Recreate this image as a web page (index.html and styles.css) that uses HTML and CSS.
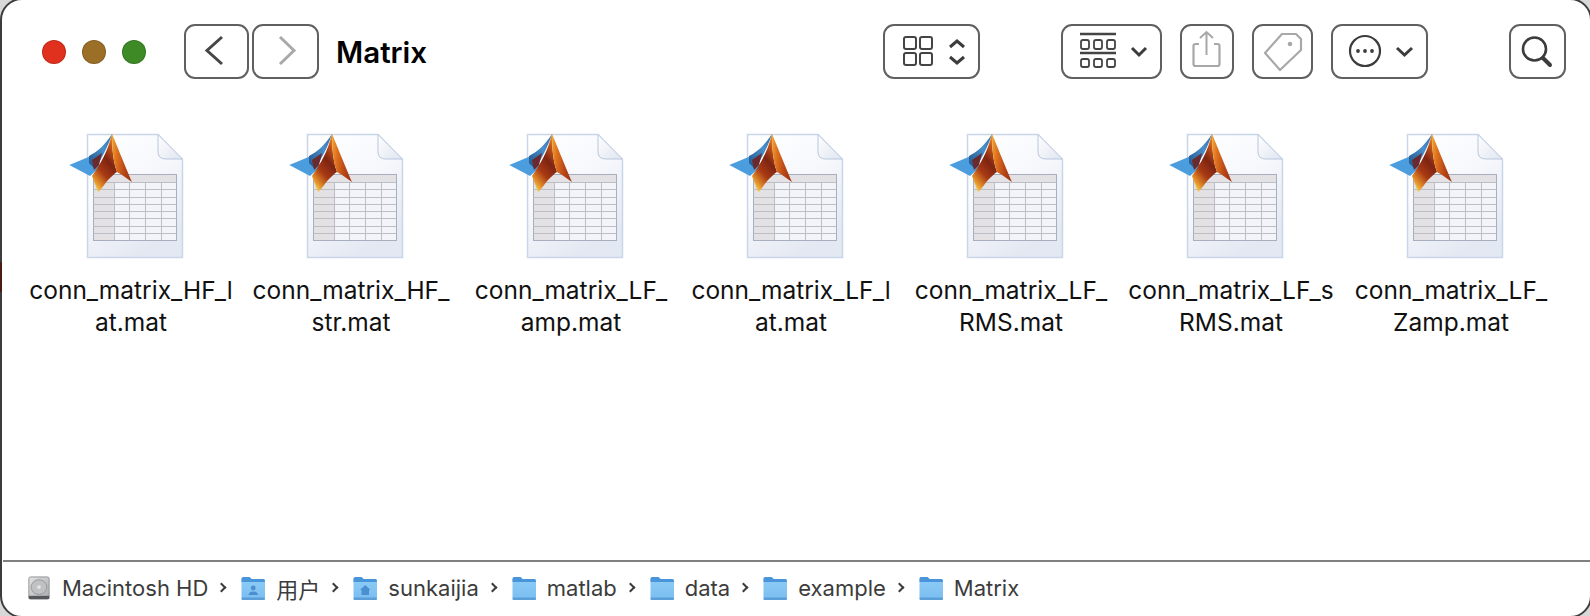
FILE: index.html
```html
<!DOCTYPE html>
<html lang="en">
<head>
  <meta charset="UTF-8" />
  <title>Matrix</title>
  <link rel="stylesheet" href="styles.css">
</head>
<body>
  <svg width="0" height="0" class="defs">
    <defs>
      <linearGradient id="sheetFill" x1="0" y1="0" x2="0.5" y2="1">
        <stop offset="0" stop-color="#ffffff"/>
        <stop offset="0.5" stop-color="#f6f8fc"/>
        <stop offset="1" stop-color="#e4e8f2"/>
      </linearGradient>
      <linearGradient id="foldFill" x1="0" y1="0" x2="1" y2="1">
        <stop offset="0" stop-color="#ffffff"/>
        <stop offset="1" stop-color="#dfe5f0"/>
      </linearGradient>
      <linearGradient id="peak" x1="0" y1="0" x2="1" y2="0.2">
        <stop offset="0" stop-color="#f0a834"/>
        <stop offset="0.3" stop-color="#e0741e"/>
        <stop offset="0.7" stop-color="#bb4a18"/>
        <stop offset="1" stop-color="#a03610"/>
      </linearGradient>
      <linearGradient id="peakLow" x1="0.2" y1="1" x2="0.7" y2="0">
        <stop offset="0" stop-color="#f7d653"/>
        <stop offset="0.15" stop-color="#e08a28"/>
        <stop offset="0.35" stop-color="#a83a14"/>
        <stop offset="0.6" stop-color="#7e2412"/>
        <stop offset="0.85" stop-color="#c5561a"/>
        <stop offset="1" stop-color="#e8922a"/>
      </linearGradient>
      <linearGradient id="ribbon" x1="0" y1="1" x2="1" y2="0">
        <stop offset="0" stop-color="#1f5288"/>
        <stop offset="0.6" stop-color="#4a8fcb"/>
        <stop offset="1" stop-color="#2d6ba6"/>
      </linearGradient>
      <linearGradient id="folderBody" x1="0" y1="0" x2="0" y2="1">
        <stop offset="0" stop-color="#8fcdf7"/>
        <stop offset="1" stop-color="#79bdf0"/>
      </linearGradient>
      <linearGradient id="diskBody" x1="0" y1="0" x2="1" y2="1">
        <stop offset="0" stop-color="#e2e3e5"/>
        <stop offset="1" stop-color="#a9abad"/>
      </linearGradient>

      <symbol id="matfile" viewBox="0 0 116 126">
        <path d="M18.500 1.500H89L113.500 27V124.500H18.500Z" fill="url(#sheetFill)" stroke="#c9d5e8" stroke-width="1.500"/>
        <path d="M89 1.500V19Q89 26 97 26H113.500Z" fill="url(#foldFill)" stroke="#b9c8df" stroke-width="1"/>
        <rect x="24.500" y="41.500" width="83" height="66" fill="#f2f4fa" stroke="#a7aebd"/>
        <rect x="25" y="42" width="82" height="7" fill="#e3e1e4"/>
        <rect x="25" y="49" width="20" height="58" fill="#e4e1e4"/>
        <path d="M24.500 49.500H107.500M24.500 56.500H107.500M24.500 64.500H107.500M24.500 71.500H107.500M24.500 78.500H107.500M24.500 85.500H107.500M24.500 93.500H107.500M24.500 100.500H107.500" stroke="#bcbec6" stroke-width="1" fill="none"/>
        <path d="M45.500 49V107M60.500 49V107M76.500 49V107M92.500 49V107" stroke="#bcbec6" stroke-width="1" fill="none"/>
        <path d="M0.300 32L22 23 32 33 21 43Z" fill="#4b9ddd"/>
        <path d="M20 23C28 19 36 12 43 1 39 14 32 26 26 36L20 30Z" fill="url(#ribbon)"/>
        <path d="M23 27L33 20 30 32 25 37Z" fill="#6a2a2e"/>
        <path d="M43 0.500C39 18 32 30 23 43L29 59C33 56 36 50 39 47 43 43 46 40 48 39 44 28 43 14 43 0.500Z" fill="url(#peakLow)"/>
        <path d="M43 0.500C45 6 55 30 63 49 58 46 54 42 48 39 44 28 43 14 43 0.500Z" fill="url(#peak)"/>
      </symbol>

      <symbol id="folder" viewBox="0 0 24 24">
        <path d="M0.500 3Q0.500 1 2.500 1H8.500L10.500 3H22Q24 3 24 5V22Q24 24 22 24H2.500Q0.500 24 0.500 22Z" fill="url(#folderBody)"/>
        <path d="M0.500 3Q0.500 1 2.500 1H8.500L10.500 3H22Q24 3 24 5V6H0.500Z" fill="#4a95da"/>
        <rect x="0.500" y="21.500" width="23.500" height="2.500" rx="1" fill="#5b9fd8"/>
      </symbol>
    </defs>
  </svg>

  <div class="window">
    <span class="edge-mark"></span>

    <header class="toolbar">
      <div class="traffic">
        <span class="light red"></span>
        <span class="light amber"></span>
        <span class="light green"></span>
      </div>

      <div class="nav">
        <button class="btn nav-back">
          <svg width="61" height="51" viewBox="0 0 61 51"><path d="M36 11L21 24.500 36 38" fill="none" stroke="#464646" stroke-width="3"/></svg>
        </button>
        <button class="btn nav-forward">
          <svg width="63" height="51" viewBox="0 0 63 51"><path d="M26 11L40 24.500 26 38" fill="none" stroke="#a9a9a9" stroke-width="3"/></svg>
        </button>
      </div>

      <h1 class="title">Matrix</h1>

      <div class="tools">
        <button class="btn tool-view">
          <svg width="93" height="51" viewBox="0 0 93 51">
            <g fill="none" stroke="#444" stroke-width="2">
              <rect x="19" y="11" width="12" height="12" rx="2"/>
              <rect x="35" y="11" width="12" height="12" rx="2"/>
              <rect x="19" y="27" width="12" height="12" rx="2"/>
              <rect x="35" y="27" width="12" height="12" rx="2"/>
            </g>
            <path d="M65 21L72 15 79 21M65 31L72 37 79 31" fill="none" stroke="#3c3c3c" stroke-width="3"/>
          </svg>
        </button>
        <button class="btn tool-group">
          <svg width="96" height="51" viewBox="0 0 96 51">
            <path d="M16 8H52M16 27H52" stroke="#444" stroke-width="2.500" fill="none"/>
            <g fill="none" stroke="#444" stroke-width="1.800">
              <rect x="17" y="14" width="8" height="9" rx="2"/>
              <rect x="30" y="14" width="8" height="9" rx="2"/>
              <rect x="43" y="14" width="8" height="9" rx="2"/>
              <rect x="17" y="33" width="8" height="8" rx="2"/>
              <rect x="30" y="33" width="8" height="8" rx="2"/>
              <rect x="43" y="33" width="8" height="8" rx="2"/>
            </g>
            <path d="M68 22L75 29 82 22" fill="none" stroke="#3c3c3c" stroke-width="3"/>
          </svg>
        </button>
        <button class="btn tool-share">
          <svg width="50" height="51" viewBox="0 0 50 51">
            <path d="M17 18H13.500Q11.500 18 11.500 20V38Q11.500 40 13.500 40H35.500Q37.500 40 37.500 38V20Q37.500 18 35.500 18H32" fill="none" stroke="#a8a8a8" stroke-width="2.200"/>
            <path d="M24.500 29V6M18 12L24.500 6 31 12" fill="none" stroke="#a8a8a8" stroke-width="2"/>
          </svg>
        </button>
        <button class="btn tool-tag">
          <svg width="57" height="51" viewBox="0 0 57 51">
            <path d="M28 8H42L47 13V24L26 44 11 27Z" fill="none" stroke="#a8a8a8" stroke-width="2.200" stroke-linejoin="round"/>
            <circle cx="36" cy="18" r="2.300" fill="#a8a8a8"/>
          </svg>
        </button>
        <button class="btn tool-more">
          <svg width="92" height="51" viewBox="0 0 92 51">
            <circle cx="31" cy="25" r="15" fill="none" stroke="#3c3c3c" stroke-width="2.200"/>
            <circle cx="24" cy="25" r="1.900" fill="#3c3c3c"/>
            <circle cx="31" cy="25" r="1.900" fill="#3c3c3c"/>
            <circle cx="38" cy="25" r="1.900" fill="#3c3c3c"/>
            <path d="M63 22L70.500 29 78 22" fill="none" stroke="#3c3c3c" stroke-width="3"/>
          </svg>
        </button>
        <button class="btn tool-search">
          <svg width="52" height="51" viewBox="0 0 52 51">
            <circle cx="22.500" cy="23" r="11.500" fill="none" stroke="#3c3c3c" stroke-width="2.600"/>
            <path d="M31 32L38 39" stroke="#3c3c3c" stroke-width="4" stroke-linecap="round"/>
          </svg>
        </button>
      </div>
    </header>

    <main class="files">
      <figure class="file">
        <svg class="file-icon"><use href="#matfile"/></svg>
        <figcaption>conn_matrix_HF_l<br>at.mat</figcaption>
      </figure>
      <figure class="file">
        <svg class="file-icon"><use href="#matfile"/></svg>
        <figcaption>conn_matrix_HF_<br>str.mat</figcaption>
      </figure>
      <figure class="file">
        <svg class="file-icon"><use href="#matfile"/></svg>
        <figcaption>conn_matrix_LF_<br>amp.mat</figcaption>
      </figure>
      <figure class="file">
        <svg class="file-icon"><use href="#matfile"/></svg>
        <figcaption>conn_matrix_LF_l<br>at.mat</figcaption>
      </figure>
      <figure class="file">
        <svg class="file-icon"><use href="#matfile"/></svg>
        <figcaption>conn_matrix_LF_<br>RMS.mat</figcaption>
      </figure>
      <figure class="file">
        <svg class="file-icon"><use href="#matfile"/></svg>
        <figcaption>conn_matrix_LF_s<br>RMS.mat</figcaption>
      </figure>
      <figure class="file">
        <svg class="file-icon"><use href="#matfile"/></svg>
        <figcaption>conn_matrix_LF_<br>Zamp.mat</figcaption>
      </figure>
    </main>

    <footer class="pathbar">
      <span class="crumb">
        <svg class="crumb-icon" viewBox="0 0 24 26">
          <rect x="1" y="1" width="22" height="24" rx="2" fill="url(#diskBody)" stroke="#8e9092"/>
          <ellipse cx="12" cy="12" rx="8.500" ry="8" fill="#bfc1c3" stroke="#8a8c8e" stroke-width="0.800"/>
          <circle cx="12" cy="12" r="2" fill="#e4e5e7"/>
          <rect x="1" y="21.500" width="22" height="3.500" fill="#55575a"/>
        </svg>
        Macintosh HD
      </span>
      <span class="crumb">
        <svg class="crumb-icon" viewBox="0 0 24 24">
          <use href="#folder"/>
          <circle cx="12.250" cy="12" r="2.400" fill="#4a8fcf"/>
          <path d="M7.500 19Q8 15.500 12.250 15.500 16.500 15.500 17 19Z" fill="#4a8fcf"/>
        </svg>
        用户
      </span>
      <span class="crumb">
        <svg class="crumb-icon" viewBox="0 0 24 24">
          <use href="#folder"/>
          <path d="M12.250 9L17.500 14H16V19H8.500V14H7Z" fill="#4a8fcf"/>
        </svg>
        sunkaijia
      </span>
      <span class="crumb"><svg class="crumb-icon"><use href="#folder"/></svg>matlab</span>
      <span class="crumb"><svg class="crumb-icon"><use href="#folder"/></svg>data</span>
      <span class="crumb"><svg class="crumb-icon"><use href="#folder"/></svg>example</span>
      <span class="crumb last"><svg class="crumb-icon"><use href="#folder"/></svg>Matrix</span>
    </footer>
  </div>
</body>
</html>
```

FILE: styles.css
```css
html, body {
  margin: 0;
  padding: 0;
  height: 616px;
  overflow: hidden;
  background: #d8d8d8;
}

.defs {
  display: block;
  height: 0;
}

/* border runs just past the top, right and bottom edges, so only the corner arcs show */
.window {
  position: relative;
  box-sizing: border-box;
  height: 620px;
  margin: -2px -2px -2px 0;
  display: flex;
  flex-direction: column;
  background: #fff;
  border: 2px solid #3c3c3c;
  border-radius: 22px;
  font-family: Inter, "Noto Sans CJK SC", sans-serif;
}

.edge-mark {
  position: absolute;
  left: -2px;
  top: 262px;
  width: 2px;
  height: 30px;
  background: #4a1a14;
}

/* toolbar */
.toolbar {
  display: flex;
  align-items: center;
  height: 55px;
  padding: 24px 24px 0 40px;
}

.traffic {
  display: flex;
  gap: 16px;
}

.light {
  box-sizing: border-box;
  width: 24px;
  height: 24px;
  border-radius: 50%;
  border: 1px solid rgba(0, 0, 0, 0.15);
}

.red { background: #e0301e; }
.amber { background: #9b6f26; }
.green { background: #3d8a27; }

.btn {
  box-sizing: border-box;
  display: flex;
  align-items: center;
  justify-content: center;
  height: 55px;
  padding: 0;
  background: #fff;
  border: 2px solid #606060;
  border-radius: 11px;
}

.nav {
  display: flex;
  gap: 3px;
  margin-left: 38px;
}

.nav-back { width: 65px; }
.nav-forward { width: 67px; }

.title {
  margin: 0 0 0 17px;
  font-size: 29.500px;
  font-weight: 600;
  color: #000;
}

.tools {
  display: flex;
  margin-left: auto;
}

.tool-view { width: 97px; }
.tool-group { width: 101px; margin-left: 81px; }
.tool-share { width: 54px; margin-left: 18px; }
.tool-tag { width: 61px; margin-left: 18px; }
.tool-more { width: 97px; margin-left: 18px; }
.tool-search { width: 57px; margin-left: 81px; }

/* file grid */
.files {
  flex: 1;
  display: flex;
  padding: 54px 0 0 19px;
}

.file {
  width: 220px;
  margin: 0;
  text-align: center;
}

.file-icon {
  display: block;
  width: 116px;
  height: 126px;
  margin-left: 48px;
}

figcaption {
  margin-top: 15px;
  font-size: 24.500px;
  line-height: 32px;
  color: #111;
  white-space: nowrap;
}

/* path bar */
.pathbar {
  box-sizing: border-box;
  display: flex;
  align-items: center;
  height: 56px;
  margin-left: 1px;
  padding: 0 0 3px 24px;
  border-top: 2px solid #808080;
  font-size: 22px;
  color: #3c3c3c;
}

.crumb {
  display: flex;
  align-items: center;
  gap: 11px;
}

.crumb::after {
  content: "";
  box-sizing: border-box;
  width: 7px;
  height: 7px;
  margin: 0 16px 0 -1px;
  border-top: 2.500px solid #3c3c3c;
  border-right: 2.500px solid #3c3c3c;
  transform: rotate(45deg);
}

.crumb.last::after {
  content: none;
}

.crumb-icon {
  width: 24px;
  height: 24px;
}
```
